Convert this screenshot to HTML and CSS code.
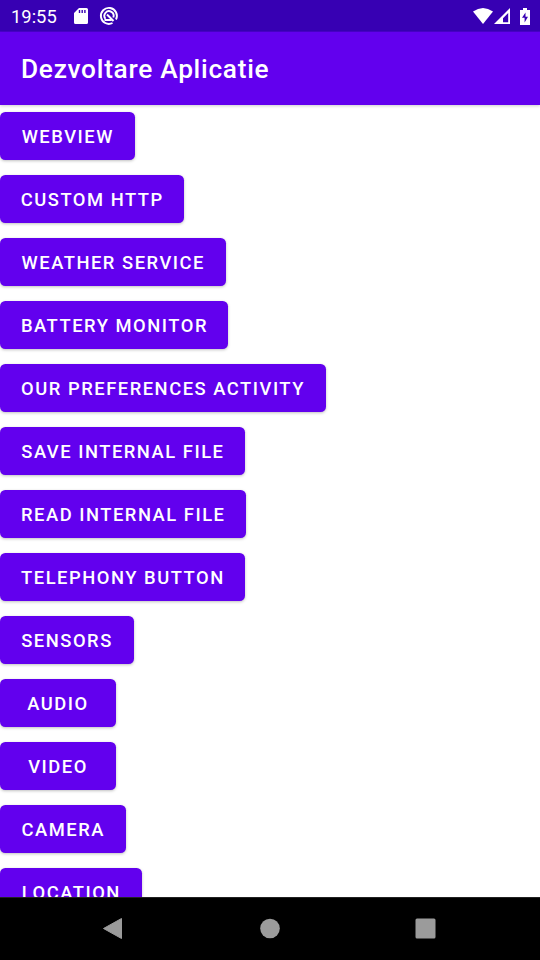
FILE: index.html
```html
<!DOCTYPE html>
<html lang="ro">
<head>
<meta charset="utf-8">
<title>Dezvoltare Aplicatie</title>
<link rel="stylesheet" href="styles.css">
</head>
<body>
<div class="status">
  <span class="clock">19:55</span>
  <svg class="sd" width="14" height="16" viewBox="0 0 14 16"><path fill="#fff" fill-rule="evenodd" d="M5 0h7.500q1.500 0 1.500 1.500v13q0 1.500-1.500 1.500h-11q-1.500 0-1.500-1.500V5zM4.800 2v3h1.400V2zM7.500 2v3h1.400V2zM10.200 2v3h1.400V2z"/></svg>
  <svg class="debug" width="20" height="20" viewBox="0 0 20 20" fill="none" stroke="#fff" stroke-width="1.900"><path d="M13.500 17A8 8 0 1 1 17 13.500"/><path d="M6.500 12.800A4.600 4.600 0 1 1 14.300 11.500"/><path d="M8 8.500l6.500 6.500M5.500 14h7" stroke-width="2"/></svg>
  <span class="spacer"></span>
  <svg class="wifi" width="20" height="16" viewBox="0 0 20 16"><path fill="#fff" d="M0 3.500Q10-3.500 20 3.500L10 16z"/></svg>
  <svg class="signal" width="16" height="16" viewBox="0 0 16 16"><path fill="#fff" fill-rule="evenodd" d="M16 0v16H0zM14.200 5L9 10.200v4h5.200z"/></svg>
  <svg class="battery" width="10" height="17" viewBox="0 0 10 17"><path fill="#fff" fill-rule="evenodd" d="M3 0h4v2h3v15H0V2h3zM5.500 4.500L2 9.800h2.600v4.700L8 8.800H5.500z"/></svg>
</div>
<header class="appbar"><h1>Dezvoltare Aplicatie</h1></header>
<main class="list">
  <button class="btn w135">WEBVIEW</button>
  <button class="btn w184">CUSTOM HTTP</button>
  <button class="btn w226">WEATHER SERVICE</button>
  <button class="btn w228">BATTERY MONITOR</button>
  <button class="btn w325">OUR PREFERENCES ACTIVITY</button>
  <button class="btn w245">SAVE INTERNAL FILE</button>
  <button class="btn w246">READ INTERNAL FILE</button>
  <button class="btn w245">TELEPHONY BUTTON</button>
  <button class="btn w133">SENSORS</button>
  <button class="btn w115">AUDIO</button>
  <button class="btn w115">VIDEO</button>
  <button class="btn w126">CAMERA</button>
  <button class="btn w142">LOCATION</button>
</main>
<nav class="navbar">
  <svg width="540" height="63" viewBox="0 0 540 63" fill="#9b9b9b"><path d="M103.500 31.500L121.500 21.500v20z" stroke="#9b9b9b" stroke-linejoin="round"/><circle cx="270" cy="31.500" r="9.800"/><rect x="415.500" y="21.500" width="20" height="20" rx="1.500"/></svg>
</nav>
</body>
</html>
```

FILE: styles.css
```css
* { box-sizing: border-box; }
body { margin: 0; width: 540px; height: 960px; overflow: hidden; display: flex; flex-direction: column; background: #fff; font-family: Roboto, sans-serif; }
svg { display: block; flex: none; }
.status { flex: none; height: 32px; display: flex; align-items: center; padding: 0 10.500px 0 11px; background: linear-gradient(#3700b3 31px, #4900cb 31px); color: #fff; }
.clock { width: 63px; font-size: 18.375px; line-height: 28px; padding-top: 2px; }
.debug { margin-left: 11px; }
.spacer { flex: 1; }
.wifi { margin-bottom: 1px; }
.signal { margin-left: 1px; }
.battery { margin-left: 10px; }
.appbar { flex: none; height: 73px; display: flex; align-items: center; padding-left: 21px; background: #6200ee; color: #fff; box-shadow: 0 1px 3px rgba(0,0,0,.2); z-index: 1; }
h1 { margin: 0; font-size: 26.250px; font-weight: 500; letter-spacing: .720px; white-space: nowrap; }
.list { flex: 1; min-height: 0; overflow: hidden; display: flex; flex-direction: column; align-items: flex-start; gap: 15px; padding-top: 7px; }
.btn { flex: none; height: 48px; border: 0; border-radius: 5.250px; padding: 2px 0 0 .500px; background: #6200ee; color: #fff; font: 500 18.375px/22px Roboto, sans-serif; letter-spacing: 1.520px; text-align: center; white-space: nowrap; box-shadow: 0 1px 3px rgba(0,0,0,.25); }
.w135 { width: 135px; }
.w184 { width: 184px; }
.w226 { width: 226px; }
.w228 { width: 228.400px; }
.w325 { width: 325.500px; }
.w245 { width: 245.250px; }
.w246 { width: 246px; }
.w133 { width: 133.500px; }
.w115 { width: 115.500px; }
.w126 { width: 126px; }
.w142 { width: 142px; }
.navbar { flex: none; height: 63px; background: linear-gradient(#222 1px, #000 1px); }
```
